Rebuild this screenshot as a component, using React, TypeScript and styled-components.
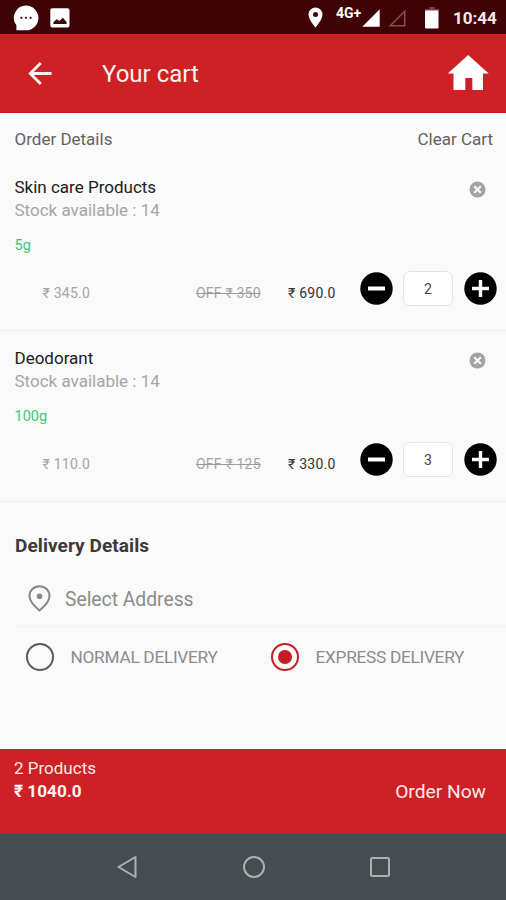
import React from "react";
import styled, { createGlobalStyle } from "styled-components";

const RED = "#cd2126";

const GlobalStyle = createGlobalStyle`
  *, *::before, *::after { box-sizing: border-box; }
  body {
    margin: 0;
    background: #fafafa;
    font-family: Roboto, "Noto Sans", sans-serif;
  }
  svg { display: block; flex: none; }
`;

const Screen = styled.div`
  width: 506px;
  height: 900px;
  display: flex;
  flex-direction: column;
  overflow: hidden;
  background: #fafafa;
`;

const Label = styled.span<{ $size: number; $color: string; $weight?: number; $track?: number }>`
  display: block;
  white-space: nowrap;
  font-size: ${(p) => p.$size}px;
  line-height: 24px;
  color: ${(p) => p.$color};
  font-weight: ${(p) => p.$weight ?? 400};
  letter-spacing: ${(p) => p.$track ?? 0}px;
`;

const StatusBar = styled.div`
  height: 34px;
  flex: none;
  display: flex;
  align-items: center;
  justify-content: space-between;
  padding: 1px 10px 0 13px;
  background: #400305;
`;

const StatusGroup = styled.div`
  display: flex;
  align-items: center;
`;

const NoticeGroup = styled(StatusGroup)`
  gap: 11px;
`;

const NetworkLabel = styled.span`
  width: 26px;
  margin: 0 0 9px 13px;
  font-size: 14px;
  line-height: 15px;
  font-weight: 700;
  color: #fff;
  white-space: nowrap;
`;

const Signal = styled.svg<{ $gap: number }>`
  margin-left: ${(p) => p.$gap}px;
`;

const Clock = styled.span`
  width: 43px;
  margin-left: 14px;
  font-size: 17px;
  line-height: 20px;
  font-weight: 700;
  color: #f5eaea;
  white-space: nowrap;
`;

const Header = styled.header`
  height: 79px;
  flex: none;
  display: flex;
  align-items: center;
  padding: 0 17px 0 28px;
  background: ${RED};
  border-bottom: 1px solid #c0191e;
`;

const Title = styled.h1`
  flex: 1;
  margin: 2px 0 0 50px;
  font-size: 24px;
  line-height: 30px;
  font-weight: 400;
  color: #fff0ee;
`;

const Content = styled.main`
  flex: 1;
  min-height: 0;
`;

const OrderHead = styled.div`
  height: 47px;
  display: flex;
  justify-content: space-between;
  padding: 14px 13px 0 14.5px;
`;

const Product = styled.section`
  height: 171px;
  border-bottom: 1px solid #efefef;
`;

const ProductTop = styled.div`
  display: flex;
  justify-content: space-between;
  padding: 15px 20.5px 0 14.5px;
`;

const ProductInfo = styled.div`
  display: flex;
  flex-direction: column;
`;

const StockLine = styled.div`
  margin-top: -1px;
`;

const UnitLine = styled.div`
  margin-top: 12px;
`;

const RemoveButton = styled.button`
  align-self: flex-start;
  margin-top: 6px;
  padding: 0;
  border: 0;
  background: none;
`;

const PriceRow = styled.div`
  height: 36px;
  margin-top: 12px;
  display: grid;
  grid-template-columns: 153.5px 92px 72px 43px 50px 43.5px;
  align-items: center;
  padding-left: 42.5px;
`;

const PriceCell = styled.div<{ $strike?: boolean }>`
  padding-top: 9px;
  text-decoration: ${(p) => (p.$strike ? "line-through" : "none")};
  text-decoration-color: #999;
`;

const RoundButton = styled.button<{ $end?: boolean }>`
  padding: 0;
  border: 0;
  background: none;
  justify-self: ${(p) => (p.$end ? "end" : "start")};
`;

const Quantity = styled.div`
  height: 35px;
  display: flex;
  align-items: center;
  justify-content: center;
  padding-top: 1px;
  border: 1px solid #e2e4e4;
  border-radius: 7px;
  background: #fff;
`;

const DeliveryTitle = styled.h2`
  margin: 0;
  padding: 32px 0 0 15px;
  font-size: 19px;
  line-height: 24px;
  font-weight: 700;
  letter-spacing: 0.08px;
  color: #3a3a3a;
`;

const AddressRow = styled.div`
  height: 69px;
  margin-left: 14px;
  display: flex;
  align-items: center;
  gap: 14px;
  padding: 13px 0 0 14px;
  border-bottom: 1px solid #f3f3f3;
`;

const AddressText = styled.div`
  padding-top: 2px;
`;

const Options = styled.div`
  height: 60px;
  display: grid;
  grid-template-columns: 245px 1fr;
  align-items: center;
  padding-left: 25.5px;
`;

const Option = styled.div`
  display: flex;
  align-items: center;
  gap: 17px;
`;

const Radio = styled.span<{ $on?: boolean }>`
  width: 28px;
  height: 28px;
  display: grid;
  place-items: center;
  border: 2px solid ${(p) => (p.$on ? "#c81c22" : "#5c5c5c")};
  border-radius: 50%;
`;

const Dot = styled.span`
  width: 14px;
  height: 14px;
  border-radius: 50%;
  background: #c81c22;
`;

const OrderBar = styled.footer`
  height: 84px;
  flex: none;
  display: flex;
  justify-content: space-between;
  padding: 7px 20px 0 14px;
  background: ${RED};
`;

const Total = styled.div`
  margin-top: -1px;
`;

const OrderAction = styled.button`
  align-self: flex-start;
  margin-top: 24px;
  padding: 0;
  border: 0;
  background: none;
  font-family: inherit;
`;

const NavBar = styled.nav`
  height: 67px;
  flex: none;
  display: grid;
  grid-template-columns: repeat(3, 126.5px);
  align-items: center;
  justify-content: center;
  justify-items: center;
  padding-left: 1px;
  background: #464d51;
  border-top: 1px solid #535154;
`;

const items = [
  { name: "Skin care Products", unit: "5g", price: "345.0", off: "350", total: "690.0", qty: 2 },
  { name: "Deodorant", unit: "100g", price: "110.0", off: "125", total: "330.0", qty: 3 },
];

const Minus = () => (
  <svg width="33" height="33" viewBox="0 0 33 33">
    <circle cx="16.5" cy="16.5" r="16.2" />
    <path d="M8 16.5h17" stroke="#fff" strokeWidth="4" />
  </svg>
);

const Plus = () => (
  <svg width="33" height="33" viewBox="0 0 33 33">
    <circle cx="16.5" cy="16.5" r="16.2" />
    <path d="M8 16.5h17M16.5 8v17" stroke="#fff" strokeWidth="3.4" />
  </svg>
);

const Remove = () => (
  <svg width="17" height="17" viewBox="0 0 17 17">
    <circle cx="8.5" cy="8.5" r="8" fill="#a3a3a3" />
    <path d="M5.2 5.2l6.6 6.6M11.8 5.2l-6.6 6.6" stroke="#fff" strokeWidth="2" />
  </svg>
);

export default function App() {
  return (
    <Screen>
      <GlobalStyle />
      <StatusBar>
        <NoticeGroup>
          <svg width="26" height="26" viewBox="0 0 26 26">
            <path d="M13 .5a12.3 12.3 0 1 1 0 24.8H3.4v-5A12.3 12.3 0 0 1 13 .5z" fill="#fff" />
            <g fill="#400305">
              <circle cx="8.4" cy="12.8" r="1.1" />
              <circle cx="13" cy="12.8" r="1.1" />
              <circle cx="17.6" cy="12.8" r="1.1" />
            </g>
          </svg>
          <svg width="20" height="20" viewBox="0 0 20 20">
            <rect x=".3" y=".3" width="19.2" height="19.2" rx="2" fill="#fff" />
            <path d="M3.5 16v-2l3.3-2.8 2.5 1.8 3.6-3.2 3.6 4.2v2z" fill="#400305" />
          </svg>
        </NoticeGroup>
        <StatusGroup>
          <svg width="15" height="21" viewBox="0 0 15 21">
            <path
              d="M7.5.5a7 7 0 0 0-7 6.9c0 5.2 7 13.1 7 13.1s7-7.9 7-13.1a7 7 0 0 0-7-6.9zm0 4.5a2.5 2.5 0 1 1 0 5 2.5 2.5 0 0 1 0-5z"
              fill="#fff"
            />
          </svg>
          <NetworkLabel>4G+</NetworkLabel>
          <Signal $gap={0} width="18" height="18" viewBox="0 0 18 18">
            <path d="M17.7.3v17.4H.3z" fill="#fff" />
          </Signal>
          <Signal $gap={8} width="18" height="18" viewBox="0 0 18 18">
            <path d="M16.7 2.2v14.5H2.2z" fill="none" stroke="#7f5254" strokeWidth="1.5" />
          </Signal>
          <Signal $gap={19} width="14" height="22" viewBox="0 0 14 22">
            <path d="M4.5 0h5v2H14v2H0V2h4.5z" fill="#75494b" />
            <rect y="3.5" width="13.5" height="18" rx="1" fill="#fff" />
          </Signal>
          <Clock>10:44</Clock>
        </StatusGroup>
      </StatusBar>

      <Header>
        <svg width="24" height="24" viewBox="0 0 24 24" fill="none" stroke="#fff4f2" strokeWidth="2.8">
          <path d="M23.5 12.5H2.5M12.8 2L2.3 12.5 12.8 23" />
        </svg>
        <Title>Your cart</Title>
        <svg width="42" height="36" viewBox="0 0 42 36">
          <path d="M21.2 0l20.5 18.500H36V35H25.300V23h-7v12H6.500V18.500H.8z" fill="#fff" />
        </svg>
      </Header>

      <Content>
        <OrderHead>
          <Label $size={17} $color="#626262">Order Details</Label>
          <Label $size={17} $color="#626262">Clear Cart</Label>
        </OrderHead>

        {items.map((item) => (
          <Product key={item.name}>
            <ProductTop>
              <ProductInfo>
                <Label $size={17} $color="#202020">{item.name}</Label>
                <StockLine>
                  <Label $size={17} $color="#a6a6a6">Stock available : 14</Label>
                </StockLine>
                <UnitLine>
                  <Label $size={14.5} $color="#42c478">{item.unit}</Label>
                </UnitLine>
              </ProductInfo>
              <RemoveButton aria-label="Remove"><Remove /></RemoveButton>
            </ProductTop>
            <PriceRow>
              <PriceCell><Label $size={14} $track={0.25} $color="#a4a4a4">₹ {item.price}</Label></PriceCell>
              <PriceCell $strike><Label $size={14} $track={0.2} $color="#a4a4a4">OFF ₹ {item.off}</Label></PriceCell>
              <PriceCell><Label $size={14} $track={0.25} $color="#333">₹ {item.total}</Label></PriceCell>
              <RoundButton aria-label="Decrease"><Minus /></RoundButton>
              <Quantity><Label $size={14} $color="#444">{item.qty}</Label></Quantity>
              <RoundButton $end aria-label="Increase"><Plus /></RoundButton>
            </PriceRow>
          </Product>
        ))}

        <DeliveryTitle>Delivery Details</DeliveryTitle>
        <AddressRow>
          <svg width="23" height="27" viewBox="0 0 23 27" fill="none" stroke="#888" strokeWidth="2">
            <path d="M11.5 1.3c-5.7 0-10 4.2-10 9.7 0 6.5 6 11 10 14.5 4-3.5 10-8 10-14.5 0-5.500-4.300-9.700-10-9.700z" />
            <circle cx="11.5" cy="11.2" r="2.8" fill="#888" stroke="none" />
          </svg>
          <AddressText>
            <Label $size={19.3} $color="#8c8c8c">Select Address</Label>
          </AddressText>
        </AddressRow>
        <Options>
          <Option>
            <Radio />
            <Label $size={17.3} $track={-0.3} $color="#8c8c8c">NORMAL DELIVERY</Label>
          </Option>
          <Option>
            <Radio $on><Dot /></Radio>
            <Label $size={17.3} $track={-0.3} $color="#8c8c8c">EXPRESS DELIVERY</Label>
          </Option>
        </Options>
      </Content>

      <OrderBar>
        <div>
          <Label $size={17} $color="#ffe9e6">2 Products</Label>
          <Total>
            <Label $size={17.2} $color="#fff4f2" $weight={700}>₹ 1040.0</Label>
          </Total>
        </div>
        <OrderAction>
          <Label $size={19.2} $color="#ffe9e6">Order Now</Label>
        </OrderAction>
      </OrderBar>

      <NavBar>
        <svg width="22" height="24" viewBox="0 0 22 24" fill="none" stroke="#abb0b1" strokeWidth="2" strokeLinejoin="round">
          <path d="M19.5 2v20L2.5 12z" />
        </svg>
        <svg width="24" height="24" viewBox="0 0 24 24" fill="none" stroke="#abb0b1" strokeWidth="2">
          <circle cx="12" cy="12" r="10" />
        </svg>
        <svg width="22" height="22" viewBox="0 0 22 22" fill="none" stroke="#abb0b1" strokeWidth="2">
          <rect x="2" y="2" width="18" height="18" rx="1" />
        </svg>
      </NavBar>
    </Screen>
  );
}
